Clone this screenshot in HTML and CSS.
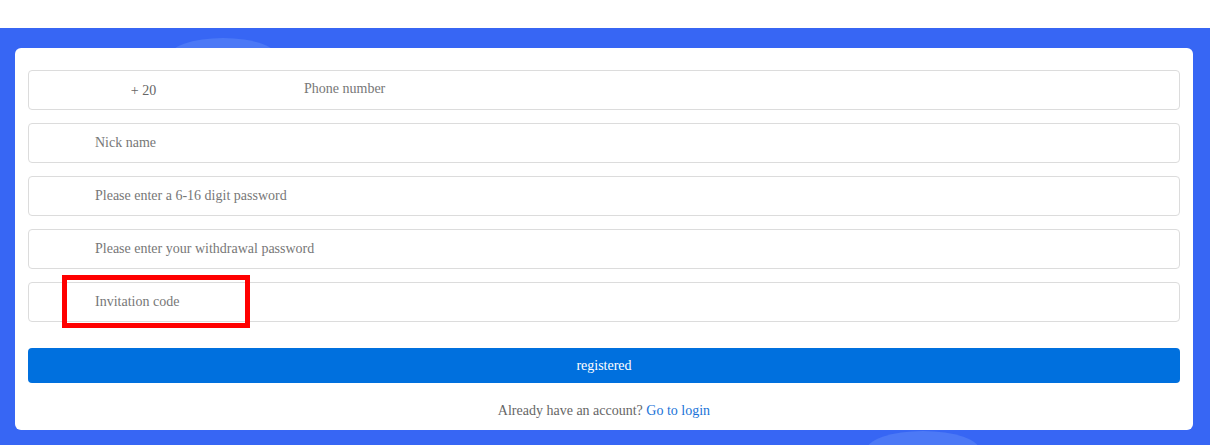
FILE: index.html
```html
<!DOCTYPE html>
<html>
<head>
<meta charset="utf-8">
<link rel="stylesheet" href="styles.css">
</head>
<body>
<div class="topbar"></div>
<main class="stage">
  <div class="blob blob-top"></div>
  <div class="blob blob-bottom"></div>
  <form class="card">
    <div class="field field-phone">
      <span class="prefix">+ 20</span>
      <span class="ph phone-ph">Phone number</span>
    </div>
    <div class="field"><span class="ph">Nick name</span></div>
    <div class="field"><span class="ph">Please enter a 6-16 digit password</span></div>
    <div class="field"><span class="ph">Please enter your withdrawal password</span></div>
    <div class="field field-invite">
      <span class="ph">Invitation code</span>
      <div class="highlight"></div>
    </div>
    <button type="button" class="submit">registered</button>
    <p class="footer">Already have an account? <a class="login">Go to login</a></p>
  </form>
</main>
</body>
</html>
```
FILE: styles.css
```css
* { box-sizing: border-box; }
html, body { margin: 0; padding: 0; }
body {
  width: 1210px;
  height: 445px;
  overflow: hidden;
  background: #fff;
  font-family: "Liberation Serif", "Times New Roman", serif;
  font-size: 14px;
}
.topbar { height: 28px; background: #fff; }
.stage {
  position: relative;
  height: 417px;
  background: #3766f4;
  padding: 20px 17px 0 15px;
  overflow: hidden;
}
.blob {
  position: absolute;
  background: #4c79f6;
  border-radius: 50%;
}
.blob-top { left: 168px; top: 10px; width: 110px; height: 40px; }
.blob-bottom { left: 866px; top: 403px; width: 114px; height: 40px; }
.card {
  position: relative;
  background: #fff;
  border-radius: 6px;
  height: 382px;
  padding: 22px 13px 0 13px;
  display: flex;
  flex-direction: column;
  gap: 13px;
  margin: 0;
}
.field {
  position: relative;
  height: 40px;
  border: 1px solid #dcdcdc;
  border-radius: 4px;
  display: flex;
  align-items: center;
  padding-left: 66px;
  color: #777;
}
.field-phone { padding-left: 0; }
.prefix { width: 229px; text-align: center; color: #666; font-size: 14px; margin-top: 1px; }
.phone-ph { margin-left: 46px; margin-top: -2px; }
.ph { color: #777; font-family: "Liberation Serif", "Times New Roman", serif; font-size: 14px; }
.highlight {
  position: absolute;
  left: 33px;
  top: -8px;
  width: 188px;
  height: 53px;
  border: 5px solid #ff0000;
}
.submit {
  margin-top: 13px;
  height: 35px;
  border: none;
  border-radius: 4px;
  background: #0070de;
  color: #fff;
  font-family: inherit;
  font-size: 14px;
  padding: 0;
}
.footer {
  margin: 7px 0 0;
  text-align: center;
  color: #666;
  font-size: 14px;
}
.login { color: #1a73d8; }
```
